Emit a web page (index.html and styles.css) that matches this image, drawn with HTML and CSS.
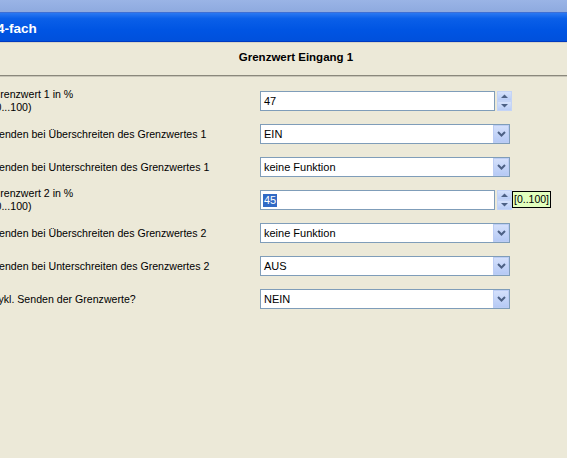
FILE: index.html
```html
<!DOCTYPE html>
<html>
<head>
<meta charset="utf-8">
<link rel="stylesheet" href="styles.css">
</head>
<body>
<div class="topstrip"></div>
<div class="titlebar"><span class="title">4-fach</span></div>
<div class="header"><span class="header-text">Grenzwert Eingang 1</span></div>
<div class="separator"></div>
<div class="form">
  <div class="row">
    <div class="label"><span>Grenzwert 1 in %</span><span>(0...100)</span></div>
    <div class="control">
      <div class="edit"><span class="val">47</span></div>
      <div class="spin">
        <div class="spin-btn"><svg width="7" height="4" viewBox="0 0 7 4"><path d="M0 4 L3.5 0.5 L7 4 Z" fill="#4d6185"/></svg></div>
        <div class="spin-btn"><svg width="7" height="4" viewBox="0 0 7 4"><path d="M0 0 L3.5 3.5 L7 0 Z" fill="#4d6185"/></svg></div>
      </div>
    </div>
  </div>
  <div class="row">
    <div class="label"><span>Senden bei Überschreiten des Grenzwertes 1</span></div>
    <div class="control">
      <div class="select"><span class="val">EIN</span><div class="drop"><svg width="9" height="6" viewBox="0 0 9 6"><path d="M1 1 L4.5 4.5 L8 1" fill="none" stroke="#4d6185" stroke-width="2"/></svg></div></div>
    </div>
  </div>
  <div class="row">
    <div class="label"><span>Senden bei Unterschreiten des Grenzwertes 1</span></div>
    <div class="control">
      <div class="select"><span class="val">keine Funktion</span><div class="drop"><svg width="9" height="6" viewBox="0 0 9 6"><path d="M1 1 L4.5 4.5 L8 1" fill="none" stroke="#4d6185" stroke-width="2"/></svg></div></div>
    </div>
  </div>
  <div class="row">
    <div class="label"><span>Grenzwert 2 in %</span><span>(0...100)</span></div>
    <div class="control">
      <div class="edit"><span class="val sel">45</span></div>
      <div class="spin">
        <div class="spin-btn"><svg width="7" height="4" viewBox="0 0 7 4"><path d="M0 4 L3.5 0.5 L7 4 Z" fill="#4d6185"/></svg></div>
        <div class="spin-btn"><svg width="7" height="4" viewBox="0 0 7 4"><path d="M0 0 L3.5 3.5 L7 0 Z" fill="#4d6185"/></svg></div>
      </div>
      <div class="tip">[0..100]</div>
    </div>
  </div>
  <div class="row">
    <div class="label"><span>Senden bei Überschreiten des Grenzwertes 2</span></div>
    <div class="control">
      <div class="select"><span class="val">keine Funktion</span><div class="drop"><svg width="9" height="6" viewBox="0 0 9 6"><path d="M1 1 L4.5 4.5 L8 1" fill="none" stroke="#4d6185" stroke-width="2"/></svg></div></div>
    </div>
  </div>
  <div class="row">
    <div class="label"><span>Senden bei Unterschreiten des Grenzwertes 2</span></div>
    <div class="control">
      <div class="select"><span class="val">AUS</span><div class="drop"><svg width="9" height="6" viewBox="0 0 9 6"><path d="M1 1 L4.5 4.5 L8 1" fill="none" stroke="#4d6185" stroke-width="2"/></svg></div></div>
    </div>
  </div>
  <div class="row">
    <div class="label"><span>Zykl. Senden der Grenzwerte?</span></div>
    <div class="control">
      <div class="select"><span class="val">NEIN</span><div class="drop"><svg width="9" height="6" viewBox="0 0 9 6"><path d="M1 1 L4.5 4.5 L8 1" fill="none" stroke="#4d6185" stroke-width="2"/></svg></div></div>
    </div>
  </div>
</div>
</body>
</html>
```
FILE: styles.css
```css
html, body {
  margin: 0;
  padding: 0;
}
body {
  width: 567px;
  height: 458px;
  overflow: hidden;
  background: #ece9d8;
  font-family: "Liberation Sans", Arial, sans-serif;
  font-size: 11px;
  color: #000;
}
.topstrip {
  height: 12px;
  background: linear-gradient(#9ab4e6, #8eaadf);
}
.titlebar {
  height: 28px;
  border-top: 1px solid #3c6fd6;
  border-bottom: 1px solid #003ac0;
  background: linear-gradient(#2a78f2 0%, #0a5fe8 20%, #0055e3 60%, #0050dc 100%);
  display: flex;
  align-items: center;
  box-shadow: 0 1px 0 #d8d4c8;
}
.title {
  color: #fff;
  font-weight: bold;
  font-size: 13.5px;
  margin-left: -3px;
  padding-top: 3px;
}
.header {
  height: 33px;
  display: flex;
  align-items: center;
  justify-content: center;
  padding-left: 25px;
  padding-bottom: 4px;
  box-sizing: border-box;
}
.header-text {
  font-weight: bold;
  font-size: 11.5px;
}
.separator {
  height: 1px;
  background: #8a887c;
  border-bottom: 1px solid #c9c6b8;
}
.form {
  padding-top: 14px;
  display: flex;
  flex-direction: column;
}
.row {
  height: 33px;
  display: grid;
  grid-template-columns: 268px auto;
  align-items: start;
  margin-left: -8px;
}
.label {
  height: 20px;
  display: flex;
  flex-direction: column;
  justify-content: center;
  line-height: 13px;
  font-size: 10.6px;
  white-space: nowrap;
}
.control {
  display: flex;
  align-items: flex-start;
  height: 20px;
}
.edit {
  width: 231px;
  height: 18px;
  border: 1px solid #7f9db9;
  background: #fff;
  display: flex;
  align-items: center;
  padding-left: 2px;
  box-sizing: content-box;
}
.edit .val {
  line-height: 13px;
  padding: 0 1px;
}
.val.sel {
  background: #316ac5;
  color: #fff;
}
.spin {
  margin-left: 2px;
  width: 15px;
  height: 20px;
  display: flex;
  flex-direction: column;
}
.spin-btn {
  height: 10px;
  background: linear-gradient(#d6e2fb, #b9cdf6);
  border: 1px solid #c4d4f6;
  box-sizing: border-box;
  display: flex;
  align-items: center;
  justify-content: center;
}
.select {
  width: 248px;
  height: 18px;
  border: 1px solid #7f9db9;
  background: #fff;
  display: flex;
  align-items: center;
  justify-content: space-between;
}
.select .val {
  padding-left: 3px;
}
.drop {
  width: 16px;
  height: 18px;
  box-sizing: border-box;
  border: 1px solid #bccdf4;
  background: linear-gradient(#d4e0fb, #b6caf5);
  display: flex;
  align-items: center;
  justify-content: center;
}
.tip {
  margin-left: 0;
  margin-top: 1px;
  height: 15px;
  padding: 0 1px;
  border: 1px solid #000;
  background: #e2ffbe;
  line-height: 15px;
  font-size: 10.5px;
}
```
